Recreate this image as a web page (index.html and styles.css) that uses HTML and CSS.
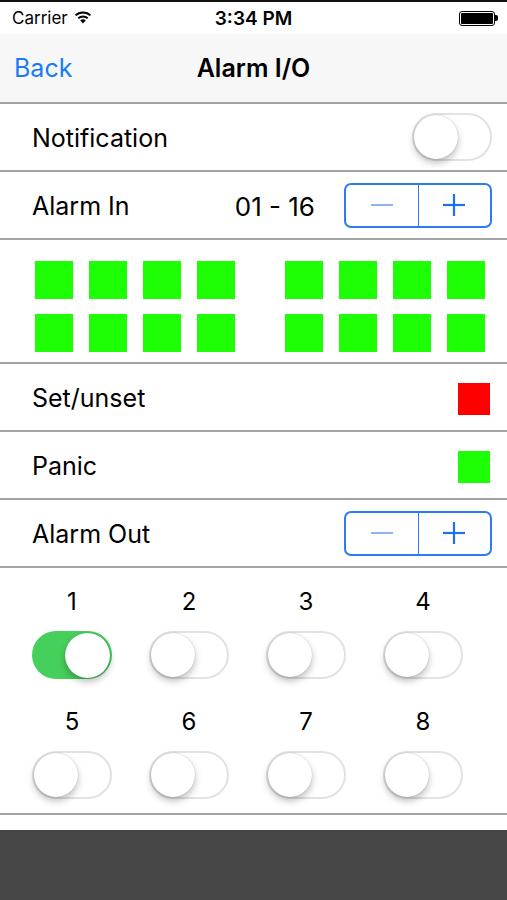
FILE: index.html
```html
<!DOCTYPE html>
<html>
<head>
<meta charset="utf-8">
<link rel="stylesheet" href="styles.css">
</head>
<body>
<div class="screen">
  <div class="statusbar">
    <div class="sb-left">Carrier
      <svg class="wifi" width="18" height="14" viewBox="0 0 18 14">
        <path d="M9 13.5 L6.2 10.4 A4.2 4.2 0 0 1 11.8 10.4 Z" fill="#000"/>
        <path d="M4.3 8.3 A6.8 6.8 0 0 1 13.7 8.3" stroke="#000" stroke-width="2" fill="none"/>
        <path d="M1.6 5.4 A10.6 10.6 0 0 1 16.4 5.4" stroke="#000" stroke-width="2" fill="none"/>
      </svg>
    </div>
    <div class="sb-time">3:34 PM</div>
    <div class="sb-right">
      <div class="battery"><div class="battery-fill"></div></div>
      <div class="battery-tip"></div>
    </div>
  </div>
  <div class="navbar">
    <div class="nav-back">Back</div>
    <div class="nav-title">Alarm I/O</div>
  </div>

  <div class="row">
    <span class="label">Notification</span>
    <div class="switch off"><div class="knob"></div></div>
  </div>

  <div class="row">
    <span class="label">Alarm In</span>
    <span class="range">01 - 16</span>
    <div class="stepper">
      <div class="step minus"><svg width="24" height="24" viewBox="0 0 24 24"><line x1="1" y1="12" x2="23" y2="12" stroke="#8ab6f8" stroke-width="2"/></svg></div>
      <div class="step plus"><svg width="24" height="24" viewBox="0 0 24 24"><line x1="1" y1="12" x2="23" y2="12" stroke="#1a72ee" stroke-width="2.2"/><line x1="12" y1="1" x2="12" y2="23" stroke="#1a72ee" stroke-width="2.2"/></svg></div>
    </div>
  </div>

  <div class="grid-section">
    <div class="group">
      <div class="sq"></div><div class="sq"></div><div class="sq"></div><div class="sq"></div>
      <div class="sq"></div><div class="sq"></div><div class="sq"></div><div class="sq"></div>
    </div>
    <div class="group">
      <div class="sq"></div><div class="sq"></div><div class="sq"></div><div class="sq"></div>
      <div class="sq"></div><div class="sq"></div><div class="sq"></div><div class="sq"></div>
    </div>
  </div>

  <div class="row">
    <span class="label">Set/unset</span>
    <div class="indicator red"></div>
  </div>

  <div class="row">
    <span class="label">Panic</span>
    <div class="indicator green"></div>
  </div>

  <div class="row">
    <span class="label">Alarm Out</span>
    <div class="stepper">
      <div class="step minus"><svg width="24" height="24" viewBox="0 0 24 24"><line x1="1" y1="12" x2="23" y2="12" stroke="#8ab6f8" stroke-width="2"/></svg></div>
      <div class="step plus"><svg width="24" height="24" viewBox="0 0 24 24"><line x1="1" y1="12" x2="23" y2="12" stroke="#1a72ee" stroke-width="2.2"/><line x1="12" y1="1" x2="12" y2="23" stroke="#1a72ee" stroke-width="2.2"/></svg></div>
    </div>
  </div>

  <div class="outputs">
    <div class="out"><span class="num">1</span><div class="switch on"><div class="knob"></div></div></div>
    <div class="out"><span class="num">2</span><div class="switch off"><div class="knob"></div></div></div>
    <div class="out"><span class="num">3</span><div class="switch off"><div class="knob"></div></div></div>
    <div class="out"><span class="num">4</span><div class="switch off"><div class="knob"></div></div></div>
    <div class="out"><span class="num">5</span><div class="switch off"><div class="knob"></div></div></div>
    <div class="out"><span class="num">6</span><div class="switch off"><div class="knob"></div></div></div>
    <div class="out"><span class="num">7</span><div class="switch off"><div class="knob"></div></div></div>
    <div class="out"><span class="num">8</span><div class="switch off"><div class="knob"></div></div></div>
  </div>

  <div class="spacer"></div>
  <div class="bottombar"></div>
</div>
</body>
</html>
```

FILE: styles.css
```css
* { box-sizing: border-box; }
html, body { margin: 0; padding: 0; background: #fff; }
body {
  font-family: Inter, "Liberation Sans", sans-serif;
  color: #000;
  width: 507px;
  height: 900px;
  overflow: hidden;
}
.screen { display: flex; flex-direction: column; height: 900px; }

.statusbar {
  height: 34px;
  border-top: 2px solid #111;
  display: flex;
  align-items: center;
  justify-content: space-between;
  padding: 0 9px 0 12px;
  background: #fff;
  position: relative;
}
.sb-left { display: flex; align-items: center; gap: 6px; font-size: 17px; }
.wifi { margin-top: -2px; }
.sb-time {
  position: absolute;
  left: 0; right: 0;
  text-align: center;
  font-size: 19px;
  font-weight: 600;
}
.sb-right { display: flex; align-items: center; }
.battery {
  width: 36px; height: 15px;
  border: 1.5px solid #000;
  border-radius: 3px;
  padding: 1px;
}
.battery-fill { width: 100%; height: 100%; background: #000; border-radius: 1px; }
.battery-tip { width: 3px; height: 6px; background: #000; border-radius: 0 2px 2px 0; }

.navbar {
  height: 70px;
  background: #f7f7f7;
  border-bottom: 2px solid #a3a3a3;
  display: flex;
  align-items: center;
  position: relative;
  padding-left: 14px;
}
.nav-back { color: #1a7cf5; font-size: 25px; }
.nav-title {
  position: absolute; left: 0; right: 0;
  text-align: center;
  font-size: 25px;
  font-weight: 600;
  pointer-events: none;
}

.row {
  height: 68px;
  border-bottom: 2px solid #a3a3a3;
  display: flex;
  align-items: center;
  padding: 0 15px 0 32px;
}
.label { font-size: 25px; flex: 1; margin-top: 2px; }
.range { font-size: 26px; margin-right: 29px; margin-top: 2px; }

.switch {
  width: 80px; height: 48px;
  border-radius: 24px;
  position: relative;
  flex: none;
}
.switch.off { background: #fff; border: 2px solid #e2e2e2; }
.switch.on { background: #44d05b; }
.knob {
  position: absolute;
  width: 45px; height: 45px;
  border-radius: 50%;
  background: #fff;
  box-shadow: 0 4px 7px rgba(0,0,0,0.25), 0 0 1px rgba(0,0,0,0.3);
}
.switch.off .knob { left: 0; top: 0; width: 44px; height: 44px; }
.switch.on .knob { right: 2px; top: 1.5px; }

.stepper {
  width: 148px; height: 45px;
  border: 2px solid #2c7bf2;
  border-radius: 7px;
  display: flex;
  flex: none;
}
.step { flex: 1; display: flex; align-items: center; justify-content: center; }
.step.minus { border-right: 1.5px solid #2c7bf2; }

.grid-section {
  height: 124px;
  border-bottom: 2px solid #a3a3a3;
  display: flex;
  padding: 21px 0 0 35px;
  gap: 50px;
}
.group {
  display: grid;
  grid-template-columns: repeat(4, 38px);
  grid-auto-rows: 38px;
  column-gap: 16px;
  row-gap: 15px;
}
.sq { background: #1eff05; }

.indicator { width: 32px; height: 32px; margin-right: 2px; margin-top: 4px; }
.indicator.red { background: #ff0000; }
.indicator.green { background: #1eff05; }

.outputs {
  height: 247px;
  border-bottom: 2px solid #a3a3a3;
  display: grid;
  grid-template-columns: repeat(4, 117px);
  grid-auto-rows: 92px;
  row-gap: 28px;
  padding: 19px 0 0 32px;
}
.out { display: flex; flex-direction: column; align-items: flex-start; }
.num { width: 80px; text-align: center; font-size: 24px; line-height: 30px; margin-bottom: 14px; }

.spacer { height: 15px; }
.bottombar { flex: 1; background: #474747; }
```
